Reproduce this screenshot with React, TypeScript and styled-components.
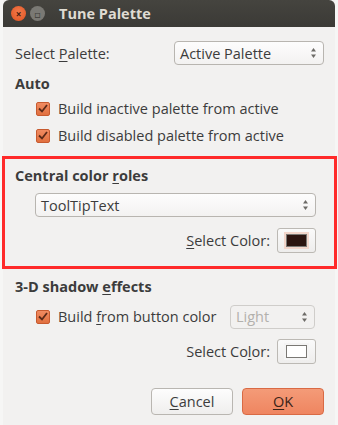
import React from "react";
import styled, { createGlobalStyle } from "styled-components";

const Global = createGlobalStyle`
  html, body {
    margin: 0;
    padding: 0;
    background: #f6f6f5;
  }
  body {
    font-family: "Open Sans", "DejaVu Sans", sans-serif;
    font-size: 14.5px;
    color: #3c3c3c;
  }
`;

const Page = styled.div`
  width: 338px;
  height: 425px;
  padding: 0 3px;
  box-sizing: border-box;
  overflow: hidden;
`;

const Window = styled.div`
  height: 100%;
  background: #f2f1f0;
  display: flex;
  flex-direction: column;
`;

const TitleBar = styled.div`
  height: 27px;
  background: linear-gradient(#45443f, #3b3a36);
  border-radius: 6px 6px 0 0;
  display: flex;
  align-items: center;
  padding-left: 8px;
  gap: 4px;
`;

const WinButton = styled.span<{ $close?: boolean }>`
  width: 15px;
  height: 15px;
  border-radius: 50%;
  background: ${(p) => (p.$close ? "radial-gradient(circle at 50% 40%, #f37a4c, #e0521f)" : "#7a7974")};
  display: flex;
  align-items: center;
  justify-content: center;
  color: ${(p) => (p.$close ? "#4a2010" : "#3e3d39")};
  font-size: 10px;
  font-weight: bold;
  line-height: 1;
`;

const TitleText = styled.span`
  margin-left: 10px;
  font-weight: bold;
  color: #dfdbd2;
  font-size: 14.5px;
`;

const Body = styled.div`
  flex: 1;
  display: flex;
  flex-direction: column;
  padding: 14px 11px 0 12px;
`;

const Row = styled.div<{ $indent?: number; $justify?: string }>`
  display: flex;
  align-items: center;
  justify-content: ${(p) => p.$justify || "flex-start"};
  padding-left: ${(p) => p.$indent || 0}px;
`;

const Heading = styled.div`
  font-weight: bold;
  height: 22px;
  display: flex;
  align-items: center;
`;

const U = styled.span`
  text-decoration: underline;
  text-underline-offset: 2px;
`;

const Combo = styled.div<{ $width?: string; $disabled?: boolean }>`
  width: ${(p) => p.$width || "auto"};
  flex: ${(p) => (p.$width ? "none" : 1)};
  height: 24px;
  box-sizing: border-box;
  border: 1px solid ${(p) => (p.$disabled ? "#cfcdca" : "#b8b5b0")};
  border-radius: 4px;
  background: ${(p) => (p.$disabled ? "#f2f1f0" : "linear-gradient(#fdfdfd, #f3f2f1)")};
  color: ${(p) => (p.$disabled ? "#b2b0ac" : "#3c3c3c")};
  display: flex;
  align-items: center;
  justify-content: space-between;
  padding: 0 6px 0 5px;
`;

const Arrows = styled.svg`
  width: 7px;
  height: 12px;
`;

const CheckRow = styled.label`
  display: flex;
  align-items: center;
  gap: 8px;
  height: 27px;
`;

const Check = styled.span`
  width: 14px;
  height: 14px;
  box-sizing: border-box;
  border: 1px solid #c75a2f;
  border-radius: 2px;
  background: linear-gradient(#f08b61, #e1703f);
  display: flex;
  align-items: center;
  justify-content: center;
`;

const Highlight = styled.div`
  margin: 7px -13px 0 -13px;
  border: 3px solid #ff2a2a;
  padding: 5px 18px 13px 10px;
  display: flex;
  flex-direction: column;
`;

const ColorButton = styled.button<{ $swatch: string; $ring: string }>`
  width: 39px;
  height: 25px;
  margin-left: 7px;
  border: 1px solid #bcb9b4;
  border-radius: 3px;
  background: linear-gradient(#fafafa, #eeedec);
  display: flex;
  align-items: center;
  justify-content: center;
  padding: 0;
  &::after {
    content: "";
    width: 19px;
    height: 11px;
    background: ${(p) => p.$swatch};
    border: 1px solid #7a7874;
    outline: 2px solid ${(p) => p.$ring};
  }
`;

const Label = styled.span`
  white-space: nowrap;
`;

const Footer = styled.div`
  margin-top: auto;
  display: flex;
  justify-content: flex-end;
  gap: 9px;
  padding-bottom: 10px;
`;

const DialogButton = styled.button<{ $primary?: boolean }>`
  width: 82px;
  height: 27px;
  border-radius: 4px;
  font: inherit;
  color: ${(p) => (p.$primary ? "#3a2318" : "#3c3c3c")};
  border: 1px solid ${(p) => (p.$primary ? "#d96a44" : "#b9b6b1")};
  background: ${(p) =>
    p.$primary ? "linear-gradient(#f49b78, #ef8560)" : "linear-gradient(#fdfdfd, #efeeed)"};
`;

function SpinArrows() {
  return (
    <Arrows viewBox="0 0 7 12">
      <path d="M3.5 1 L6 4.5 H1 Z" fill="#6d6b67" />
      <path d="M3.5 11 L6 7.5 H1 Z" fill="#6d6b67" />
    </Arrows>
  );
}

function CheckBox() {
  return (
    <Check>
      <svg width="10" height="9" viewBox="0 0 10 9">
        <path d="M1 4.5 L4 7.5 L9 1" stroke="#5a2a18" strokeWidth="1.8" fill="none" />
      </svg>
    </Check>
  );
}

export default function App() {
  return (
    <Page>
      <Global />
      <Window>
        <TitleBar>
          <WinButton $close>×</WinButton>
          <WinButton>▫</WinButton>
          <TitleText>Tune Palette</TitleText>
        </TitleBar>
        <Body>
          <Row $justify="space-between">
            <Label>
              Select <U>P</U>alette:
            </Label>
            <Combo $width="150px">
              Active Palette
              <SpinArrows />
            </Combo>
          </Row>
          <Heading style={{ marginTop: 7 }}>Auto</Heading>
          <Row $indent={21} style={{ marginTop: 1 }}>
            <CheckRow>
              <CheckBox />
              Build inactive palette from active
            </CheckRow>
          </Row>
          <Row $indent={21}>
            <CheckRow>
              <CheckBox />
              Build disabled palette from active
            </CheckRow>
          </Row>

          <Highlight>
            <Heading>
              <span>
                Central color <U>r</U>oles
              </span>
            </Heading>
            <Row $indent={20} style={{ marginTop: 7 }}>
              <Combo>
                ToolTipText
                <SpinArrows />
              </Combo>
            </Row>
            <Row $justify="flex-end" style={{ marginTop: 11 }}>
              <Label>
                <U>S</U>elect Color:
              </Label>
              <ColorButton $swatch="#2c1510" $ring="#f2d6cb" />
            </Row>
          </Highlight>

          <Heading style={{ marginTop: 6 }}>
            <span>
              3-D shadow <U>e</U>ffects
            </span>
          </Heading>
          <Row $indent={21} $justify="space-between" style={{ marginTop: 6, paddingRight: 9 }}>
            <CheckRow>
              <CheckBox />
              <span>
                Build <U>f</U>rom button color
              </span>
            </CheckRow>
            <Combo $width="85px" $disabled>
              Light
              <SpinArrows />
            </Combo>
          </Row>
          <Row $justify="flex-end" style={{ marginTop: 9, paddingRight: 8 }}>
            <Label>
              Select Co<U>l</U>or:
            </Label>
            <ColorButton $swatch="#ffffff" $ring="#f4f4f4" />
          </Row>

          <Footer>
            <DialogButton>
              <U>C</U>ancel
            </DialogButton>
            <DialogButton $primary>
              <U>O</U>K
            </DialogButton>
          </Footer>
        </Body>
      </Window>
    </Page>
  );
}
